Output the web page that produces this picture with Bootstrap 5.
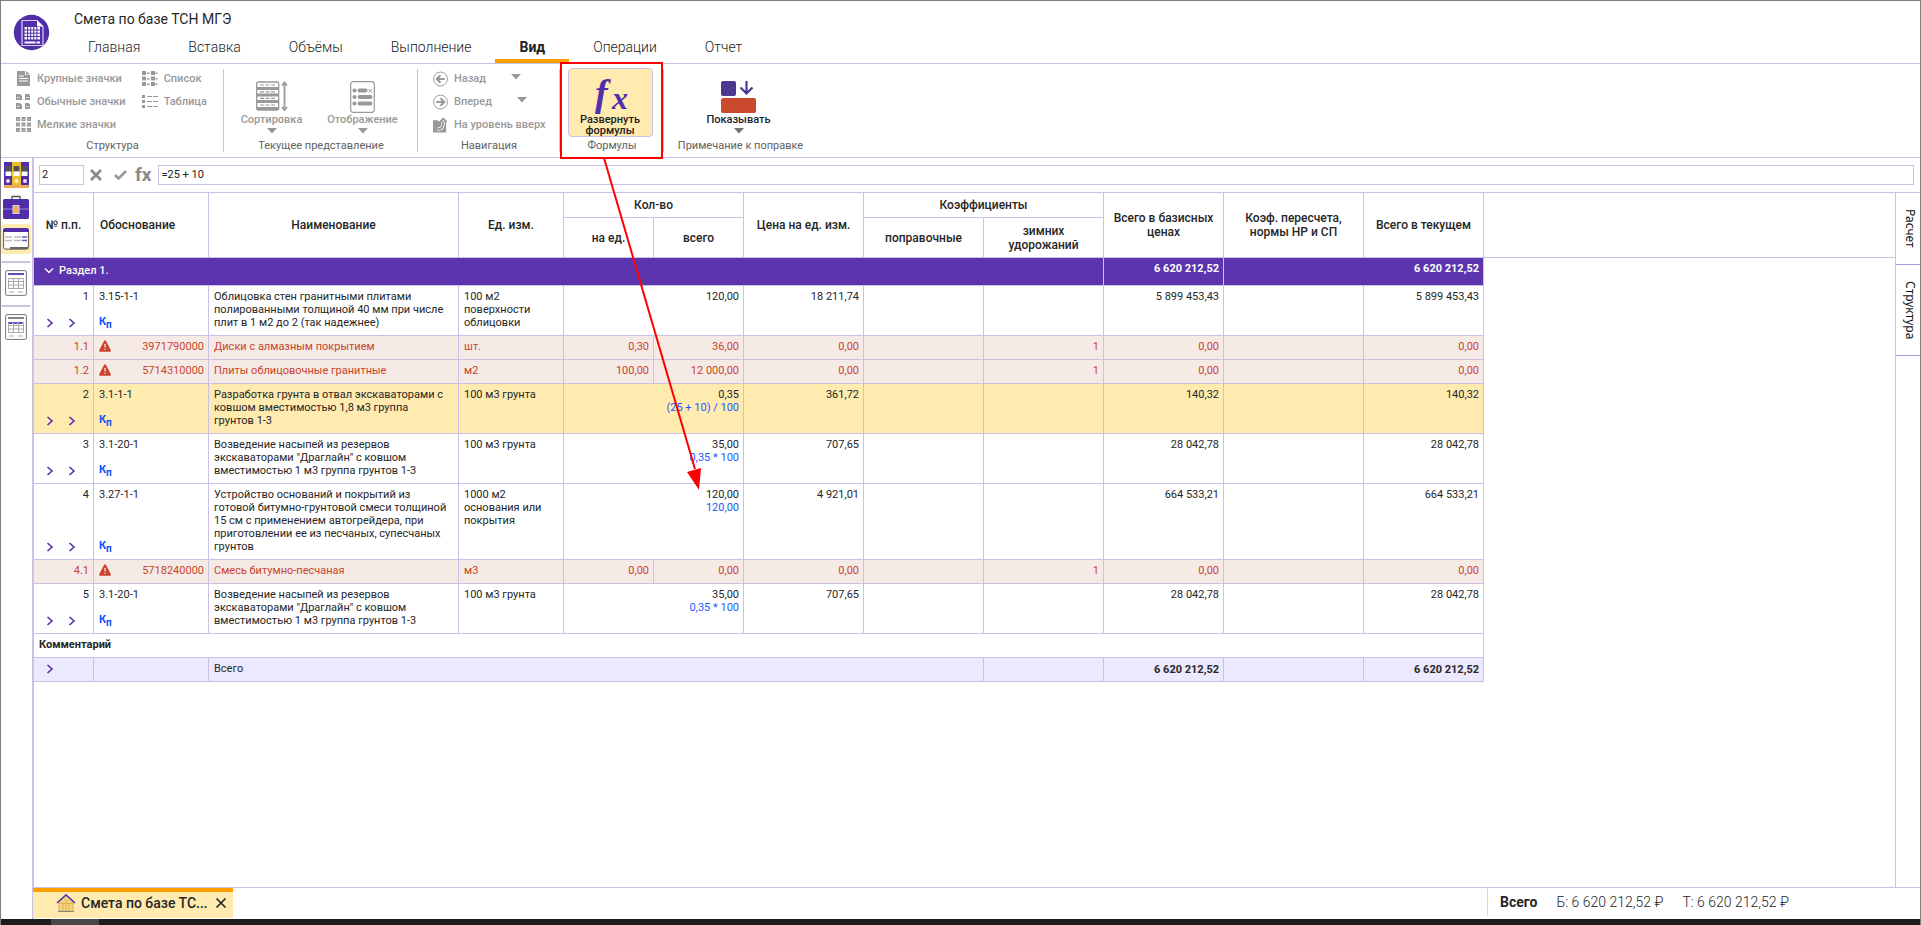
<!DOCTYPE html>
<html lang="ru">
<head>
<meta charset="utf-8">
<meta name="viewport" content="width=device-width, initial-scale=1">
<title>Смета по базе ТСН МГЭ</title>
<link href="https://cdn.jsdelivr.net/npm/bootstrap@5.3.0/dist/css/bootstrap.min.css" rel="stylesheet">
<style>
:root{--line:#cbc1e6;--brand:#5c34ae;--brand-dark:#512da8;--sel:#ffeab0;--amber:#ffa000;--alert:#c9452b;--mute:#999}
body{font-family:Roboto,"Liberation Sans",sans-serif;font-size:11px;line-height:13px;color:#262626;background:#fff;border:1px solid #7f7f7f;border-bottom-width:0}
svg{display:block;flex:none}
.line-b{border-bottom:1px solid var(--line)}
button{background:none;border:0;padding:0;color:inherit;font:inherit}
/* header */
.logo{margin:13px 0 0 12px}
.doc-title{font-size:14px;line-height:20px;font-weight:400;margin:8px 0 0 24px}
.menu{margin-left:14px}
.menu .nav-link{font-size:14px;line-height:20px;font-weight:300;color:#212121;padding:8px 24px 2px;border-bottom:4px solid transparent;border-radius:0}
.menu .nav-link.active{font-weight:700;border-color:var(--amber)}
/* ribbon */
.ribbon{height:94px}
.grp{position:relative;display:flex;flex-direction:column;align-items:center;justify-content:space-between;padding:3px 0 4px}
.grp::after{content:"";position:absolute;right:0;top:5px;bottom:5px;width:1px;background:var(--line)}
.grp:last-child::after{display:none}
.grp-name{font-size:11px;line-height:14px;color:#616161}
.grp .items{color:var(--mute);font-weight:500}
.grp .items.wide{padding-left:15px}
.grp .items.bigs{padding-top:14px}
.small-btn{display:flex;align-items:center;gap:6px;height:23px;white-space:nowrap}
.small-btn .drop{margin:0 0 4px 19px}
.big-btn{display:flex;flex-direction:column;align-items:center;width:91px;line-height:11px;font-weight:500}
.big-btn .pic{height:32px;margin-bottom:1px}
.big-btn .drop{margin-top:3px}
.big-btn.on{width:85px;height:69px;background:var(--sel);border:1px solid var(--line);border-radius:4px;padding-top:2px;color:#212121;margin-top:-3px}
.big-btn.on .pic{height:42px}
.fx-mark{font-family:"Liberation Serif",serif;font-style:italic;font-weight:700;fill:var(--brand-dark);overflow:visible}
.frame{position:absolute;left:0;right:1px;top:-2px;bottom:-2px;border:2px solid red;z-index:3}
.arrow{position:absolute;left:41px;top:94px;z-index:4;pointer-events:none}
/* rail */
.rail{flex:0 0 33px;border-right:2px solid var(--line)}
.rail button{display:flex;justify-content:center;width:30px}
.rail .doc{padding:7px 0 9px}
.rail .bag{padding:7px 0 4px}
.rail hr{width:28px;margin:0 0 0 1px;border-top:2px solid var(--line);opacity:1}
.rail .on{background:var(--sel);border-radius:3px;margin-bottom:7px}
/* formula bar */
.fbar{height:35px;padding:7px 6px 8px 5px}
.fbar input{height:20px;border:1px solid var(--line);border-radius:0;font-size:11px;line-height:14px;padding:0 2px 1px;color:#212121;outline:0}
.fbar .tools{margin:0 7px 0 6px}
.fbar .fx{font-size:19px;line-height:20px;font-weight:700;color:#8a8a8a}
/* sheet */
.sheet{width:100%;table-layout:fixed;border-collapse:separate;border-spacing:0}
.sheet th,.sheet td{border-right:1px solid var(--line);border-bottom:1px solid var(--line);padding:4px 4px 0 5px;vertical-align:top}
.sheet thead th{font-size:12px;line-height:14px;font-weight:500;text-align:center;vertical-align:middle;padding:0 4px}
.sheet thead th.basis{text-align:left;padding-left:6px}
.sheet thead th.rest{border-right:0}
.sheet tbody tr{height:24px}
.sheet tr.lines3 td{height:50px}
.sheet tr.lines5 td{height:76px}
.sheet td.nm{padding-right:9px}
.sheet .sect{height:28px;background:var(--brand);color:#fff;font-weight:500}
.sheet .sect td.num{font-weight:700}
.sheet .nob{border-right:0}
.sect-name{display:flex;align-items:center;gap:4px;padding:2px 0 0 4px}
.num{text-align:right}
.sub td{background:#f5eae6;color:var(--alert)}
.picked td{background:var(--sel)}
.total td{background:#ece8fd}
.sheet .total td.num{padding-top:5px}
.f{color:#2457ff}
.stack{display:flex;flex-direction:column;justify-content:space-between;height:100%}
.kp{color:#0b4fff;font-weight:700;font-size:11px;line-height:14px;text-align:left;padding-bottom:6px;text-decoration:none}
.kp sub{font-size:10px;bottom:-3px}
.chev{display:flex;gap:14px;padding:0 0 7px 7px}
.total .chev{padding:2px 0 0 7px}
/* side tabs */
.side{width:25px;border-left:1px solid var(--line)}
.side button{writing-mode:vertical-rl;font-family:"Noto Sans","Open Sans",sans-serif;font-size:12px;line-height:20px;width:24px;border-bottom:1px solid #a996d8;color:#111}
/* bottom */
.foot{height:32px;border-top:1px solid var(--line);font-size:14px;line-height:20px}
.doc-tab{width:200px;height:30px;background:var(--sel);border-top:4px solid var(--amber);font-weight:500;padding:0 6px 4px 23px;margin-left:-1px}
.doc-tab .cap{margin-left:5px}
.sum{width:433px;height:28px;border-left:1px solid #d6d3e2;padding-left:12px;gap:19px;font-weight:300}
.taskbar{height:6px;background:#1c1c1c;padding-left:50px}
.taskbar div{width:48px;height:100%;background:#484848}
</style>
</head>
<body class="d-flex flex-column min-vh-100">
<svg width="0" height="0" class="position-absolute" aria-hidden="true">
  <defs>
    <symbol id="gt" viewBox="0 0 8 10"><path d="M1.500 1l4.500 4-4.500 4" fill="none" stroke="#5730ad" stroke-width="1.600"/></symbol>
    <symbol id="warn" viewBox="0 0 12 12"><path d="M6 .3c.5 0 .8.300 1 .700l4.700 9c.4.900 0 1.700-1 1.700H1.300c-1 0-1.400-.8-1-1.700L5 1c.2-.4.500-.7 1-.7z" fill="#c9452b"/><path d="M6 4v3.600M6 8.800v1.300" stroke="#f5eae6" stroke-width="1.300"/></symbol>
    <symbol id="down" viewBox="0 0 10 6"><path d="M0 0h10L5 5.500z" fill="currentColor"/></symbol>
  </defs>
</svg>

<header class="d-flex line-b">
  <svg class="logo" width="37" height="37" viewBox="0 0 37 37"><circle cx="18.500" cy="18.500" r="17.700" fill="#512da8"/><path d="M9 6.500h15l6 6v19H9z" fill="none" stroke="#d9cff2" stroke-width="1.200"/><path d="M24 6.500v6h6z" fill="#fff"/><path d="M11.500 13h15.500v12.500H11.500z" fill="#fff"/><path d="M11 16h16.500M11 19.200h16.500M11 22.400h16.500M14.600 13v13M17.700 13v13M20.800 13v13M23.900 13v13" stroke="#512da8" stroke-width="1"/><path d="M11.500 27.500h11v2h-11zM23.500 27.500H27v2h-3.500z" fill="#fff"/></svg>
  <div>
    <h1 class="doc-title">Смета по базе ТСН МГЭ</h1>
    <nav class="nav menu">
      <a class="nav-link" href="#">Главная</a><a class="nav-link" href="#">Вставка</a><a class="nav-link" href="#">Объёмы</a><a class="nav-link" href="#">Выполнение</a><a class="nav-link active" href="#">Вид</a><a class="nav-link" href="#">Операции</a><a class="nav-link" href="#">Отчет</a>
    </nav>
  </div>
</header>

<section class="ribbon d-flex line-b">
  <div class="grp" style="width:223px">
    <div class="items wide d-flex gap-3 w-100">
      <div>
        <button class="small-btn"><svg width="15" height="15" viewBox="0 0 15 15"><path d="M1 0h8v4h5v11H1z" fill="#999"/><path d="M10 0l4 3.500h-4z" fill="#999"/><path d="M3 5h5M3 7.500h9M3 10h9" stroke="#fff"/></svg>Крупные значки</button>
        <button class="small-btn"><svg width="15" height="15" viewBox="0 0 15 15"><path d="M0 0h4l2 2v4H0zM9 0h4l1 2v4H9zM0 9h4l2 2v4H0zM9 9h4l1 2v4H9z" fill="#999"/><path d="M1 3.500h3M10 3.500h3M1 12.500h3M10 12.500h3" stroke="#ddd"/></svg>Обычные значки</button>
        <button class="small-btn"><svg width="15" height="15" viewBox="0 0 15 15"><path d="M0 0h4v4H0zM5.500 0h4v4h-4zM11 0h4v4h-4zM0 5.500h4v4H0zM5.500 5.500h4v4h-4zM11 5.500h4v4h-4zM0 11h4v4H0zM5.500 11h4v4h-4zM11 11h4v4h-4z" fill="#999"/><path d="M1 2.500h13M1 8h13M1 13.500h13" stroke="#ccc" stroke-width=".6"/></svg>Мелкие значки</button>
      </div>
      <div>
        <button class="small-btn"><svg width="16" height="15" viewBox="0 0 16 15"><path d="M0 0h4v4H0zM0 5.500h4v4H0zM0 11h4v4H0zM9 0h4v4H9zM9 5.500h4v4H9zM9 11h4v4H9zM5 1.500h2.500v1.500H5zM5 7h2.500v1.500H5zM5 12.500h2.500V14H5zM13.500 1.500h2v1.500h-2zM13.500 7h2v1.500h-2zM13.500 12.500h2V14h-2z" fill="#999"/></svg>Список</button>
        <button class="small-btn"><svg width="16" height="15" viewBox="0 0 16 15"><path d="M0 1h3v3H0zM0 6h3v3H0zM0 11h3v3H0z" fill="#999"/><path d="M5 2.500h5M11 2.500h5M5 7.500h5M11 7.500h5M5 12.500h5M11 12.500h5" stroke="#999"/></svg>Таблица</button>
      </div>
    </div>
    <div class="grp-name">Структура</div>
  </div>
  <div class="grp" style="width:194px">
    <div class="items bigs d-flex pe-2">
      <button class="big-btn"><span class="pic"><svg width="32" height="31" viewBox="0 0 32 31"><rect x=".7" y="1" width="22" height="28" rx="1.500" fill="#fff" stroke="#999" stroke-width="1.300"/><path d="M1 7.500h22M1 14h22M1 20.500h22M1 27.500h22" stroke="#999" stroke-width="3"/><path d="M4 4h15M4 10.800h15M4 17.300h15M4 24h15" stroke="#999" stroke-width="1.200" stroke-dasharray="4 1.500"/><path d="M28.500 3v24M26 4.500L28.500 1.500 31 4.500M26 26l2.500 3 2.500-3" fill="none" stroke="#999" stroke-width="1.800"/></svg></span>Сортировка<svg class="drop" width="10" height="6"><use href="#down"/></svg></button>
      <button class="big-btn"><span class="pic"><svg width="25" height="32" viewBox="0 0 25 32"><rect x=".7" y=".7" width="23.600" height="30.600" rx="2.500" fill="#fff" stroke="#999" stroke-width="1.200"/><circle cx="4.500" cy="9.500" r="2" fill="#999"/><circle cx="4.500" cy="16" r="2" fill="#999"/><circle cx="4.500" cy="22.500" r="2" fill="#999"/><path d="M9.500 9.500h6M9.500 16h11M9.500 22.500h11" stroke="#999" stroke-width="4" stroke-linecap="round"/><path d="M18.500 8l3.500 3.500M22 8l-3.500 3.500" stroke="#999"/></svg></span>Отображение<svg class="drop" width="10" height="6"><use href="#down"/></svg></button>
    </div>
    <div class="grp-name">Текущее представление</div>
  </div>
  <div class="grp" style="width:142px">
    <div class="items wide w-100 text-start">
      <button class="small-btn w-100"><svg width="15" height="16" viewBox="0 0 16 16"><circle cx="8" cy="8" r="7.400" fill="#fff" stroke="#999"/><path d="M12.500 8H4M8 4L4 8l4 4" fill="none" stroke="#999" stroke-width="2.200"/></svg>Назад<svg class="drop" width="10" height="6"><use href="#down"/></svg></button>
      <button class="small-btn w-100"><svg width="15" height="16" viewBox="0 0 16 16"><circle cx="8" cy="8" r="7.400" fill="#fff" stroke="#999"/><path d="M3.500 8H12M8 4l4 4-4 4" fill="none" stroke="#999" stroke-width="2.200"/></svg>Вперед<svg class="drop" width="10" height="6"><use href="#down"/></svg></button>
      <button class="small-btn w-100"><svg width="15" height="16" viewBox="0 0 16 16"><path d="M0 3h5l1 1h8v12H0z" fill="#999"/><path d="M5 12.500c4 0 6-2 6-8" fill="none" stroke="#fff" stroke-width="3.600"/><path d="M5 12.500c4 0 6-2 6-8M7.500 5L11 1.200 14.500 5" fill="none" stroke="#999" stroke-width="2"/></svg>На уровень вверх</button>
    </div>
    <div class="grp-name">Навигация</div>
  </div>
  <div class="grp" style="width:104px">
    <div class="items pt-1 mb-auto pe-1"><button class="big-btn on"><span class="pic"><svg width="44" height="42" viewBox="0 0 44 42" class="fx-mark" aria-hidden="true"><text x="7" y="35" font-size="38">f</text><text x="24" y="38" font-size="32">x</text></svg></span>Развернуть<br>формулы</button></div>
    <div class="grp-name">Формулы</div>
    <div class="frame"></div>
    <svg class="arrow" width="110" height="335" viewBox="0 0 110 335"><path d="M3 0l91 311" stroke="red" stroke-width="2"/><path d="M86 314l14-4-2 22z" fill="red"/></svg>
  </div>
  <div class="grp" style="width:153px">
    <div class="items bigs d-flex pe-1">
      <button class="big-btn text-dark"><span class="pic"><svg width="36" height="32" viewBox="0 0 36 32"><rect width="15" height="15" rx="2" fill="#4d3791"/><path d="M25.500 0v12M19.500 6.500l6 6 6-6" fill="none" stroke="#4d3791" stroke-width="2.200"/><rect y="17" width="35" height="15" rx="2" fill="#cb4a2e"/></svg></span>Показывать<svg class="drop text-secondary" width="10" height="6"><use href="#down"/></svg></button>
    </div>
    <div class="grp-name text-nowrap">Примечание к поправке</div>
  </div>
</section>

<div class="d-flex flex-grow-1">
  <aside class="rail d-flex flex-column">
    <button class="pt-1" aria-label="Папки"><svg width="25" height="26" viewBox="0 0 25 26"><path d="M0 0h8v23H0zM17 0h8v23h-8z" fill="#512da8"/><path d="M8 0h9v23H8z" fill="#ecc12d"/><path d="M1.500 4h6v5.500h-6zM9.500 4h6v5.500h-6zM17.500 4h6v5.500h-6z" fill="#555"/><path d="M1.500 9.500h6V14h-6zM9.500 9.500h6V14h-6zM17.500 9.500h6V14h-6z" fill="#fff"/><circle cx="4" cy="19" r="2" fill="#e5def5"/><circle cx="12.500" cy="19" r="2" fill="#fff3c0"/><circle cx="21" cy="19" r="2" fill="#e5def5"/><path d="M0 23h25v3H0z" fill="#ebad5c"/></svg></button>
    <button class="bag" aria-label="Портфель"><svg width="26" height="25" viewBox="0 0 26 25"><path d="M9 4V1.500h8V4" fill="none" stroke="#555" stroke-width="1.300"/><rect y="4" width="26" height="20" rx="1.500" fill="#512da8"/><path d="M0 14h26" stroke="#9d86d6"/><rect x="10" y="10.500" width="6" height="8" fill="#ebad5c" stroke="#d9cff2"/></svg></button>
    <button class="on py-1" aria-label="Смета"><svg width="26" height="22" viewBox="0 0 26 22"><rect x=".6" y=".6" width="24.800" height="20.500" rx="2" fill="#fff" stroke="#555"/><path d="M0 2c0-1 1-2 2-2h22c1 0 2 1 2 2v2H0z" fill="#512da8"/><path d="M2 9h7M11 9h7M2 12.500h7M11 12.500h7" stroke="#bbb" stroke-width="1.500"/><path d="M19 9h5M19 12.500h5" stroke="#7352bd" stroke-width="1.500"/><path d="M7 20h18" stroke="#666" stroke-width="2"/></svg></button>
    <hr>
    <button class="doc" aria-label="Отчёт"><svg width="22" height="26" viewBox="0 0 22 26"><rect x=".6" y=".6" width="20.800" height="24.800" rx="1.500" fill="#fff" stroke="#777"/><path d="M3 4h16" stroke="#6b47bd" stroke-width="2"/><path d="M3.500 8.500h15v10h-15zM3.500 11.500h15M3.500 15h15M8.500 8.500v10M13.500 8.500v10" fill="none" stroke="#aaa"/><path d="M4 22h5M13 22h5" stroke="#aaa"/></svg></button>
    <hr>
    <button class="doc" aria-label="Ведомость"><svg width="22" height="26" viewBox="0 0 22 26"><rect x=".6" y=".6" width="20.800" height="24.800" rx="1.500" fill="#fff" stroke="#777"/><path d="M3 4h16" stroke="#777" stroke-width="1.800"/><path d="M3.500 8.500h15v10h-15zM3.500 11.500h15M3.500 15h15M8.500 8.500v10M13.500 8.500v10" fill="none" stroke="#aaa"/><path d="M3.500 9h15" stroke="#6b47bd" stroke-width="2" stroke-dasharray="4 1"/><path d="M4 22h5M13 22h5" stroke="#aaa"/></svg></button>
  </aside>

  <div class="d-flex flex-column flex-grow-1">
    <div class="fbar d-flex align-items-center line-b">
      <input type="text" value="2" aria-label="Ячейка" style="width:45px">
      <div class="tools d-flex align-items-center">
        <button aria-label="Отменить"><svg width="12" height="12" viewBox="0 0 12 12"><path d="M1 1l10 10M11 1L1 11" stroke="#8a8a8a" stroke-width="2.800"/></svg></button>
        <button class="ms-2 ps-1" aria-label="Принять"><svg width="13" height="10" viewBox="0 0 13 10"><path d="M1 5l3.500 3.500L12 1" fill="none" stroke="#999" stroke-width="2.600"/></svg></button>
        <span class="fx ms-2">fx</span>
      </div>
      <input class="flex-grow-1" type="text" value="=25 + 10" aria-label="Формула">
    </div>
    <div class="d-flex flex-grow-1">
      <div class="flex-grow-1">
        <table class="sheet">
          <colgroup><col style="width:60px"><col style="width:115px"><col style="width:250px"><col style="width:105px"><col style="width:90px"><col style="width:90px"><col style="width:120px"><col style="width:120px"><col style="width:120px"><col style="width:120px"><col style="width:140px"><col style="width:120px"><col></colgroup>
          <thead>
            <tr style="height:25px"><th rowspan="2">№ п.п.</th><th rowspan="2" class="basis">Обоснование</th><th rowspan="2">Наименование</th><th rowspan="2">Ед. изм.</th><th colspan="2">Кол-во</th><th rowspan="2">Цена на ед. изм.</th><th colspan="2">Коэффициенты</th><th rowspan="2">Всего в базисных ценах</th><th rowspan="2">Коэф. пересчета, нормы НР и СП</th><th rowspan="2">Всего в текущем</th><th rowspan="2" class="rest"></th></tr>
            <tr style="height:40px"><th>на ед.</th><th>всего</th><th>поправочные</th><th>зимних<br>удорожаний</th></tr>
          </thead>
          <tbody>
            <tr class="sect"><td colspan="9"><div class="sect-name"><svg width="12" height="8" viewBox="0 0 12 8"><path d="M2 1.500l4 4 4-4" fill="none" stroke="#fff" stroke-width="1.300"/></svg>Раздел 1.</div></td><td class="num">6 620 212,52</td><td class="nob"></td><td class="num">6 620 212,52</td></tr>

            <tr class="lines3"><td class="num"><div class="stack">1<span class="chev"><svg width="8" height="10"><use href="#gt"/></svg><svg width="8" height="10"><use href="#gt"/></svg></span></div></td><td><div class="stack">3.15-1-1<a class="kp" href="#">К<sub>п</sub></a></div></td><td class="nm">Облицовка стен гранитными плитами полированными толщиной 40 мм при числе плит в 1 м2 до 2 (так надежнее)</td><td>100 м2 поверхности облицовки</td><td colspan="2" class="num">120,00</td><td class="num">18 211,74</td><td></td><td></td><td class="num">5 899 453,43</td><td></td><td class="num">5 899 453,43</td></tr>

            <tr class="sub"><td class="num">1.1</td><td><div class="d-flex justify-content-between"><svg width="12" height="12"><use href="#warn"/></svg>3971790000</div></td><td class="nm">Диски с алмазным покрытием</td><td>шт.</td><td class="num">0,30</td><td class="num">36,00</td><td class="num">0,00</td><td></td><td class="num">1</td><td class="num">0,00</td><td></td><td class="num">0,00</td></tr>
            <tr class="sub"><td class="num">1.2</td><td><div class="d-flex justify-content-between"><svg width="12" height="12"><use href="#warn"/></svg>5714310000</div></td><td class="nm">Плиты облицовочные гранитные</td><td>м2</td><td class="num">100,00</td><td class="num">12 000,00</td><td class="num">0,00</td><td></td><td class="num">1</td><td class="num">0,00</td><td></td><td class="num">0,00</td></tr>

            <tr class="lines3 picked"><td class="num"><div class="stack">2<span class="chev"><svg width="8" height="10"><use href="#gt"/></svg><svg width="8" height="10"><use href="#gt"/></svg></span></div></td><td><div class="stack">3.1-1-1<a class="kp" href="#">К<sub>п</sub></a></div></td><td class="nm">Разработка грунта в отвал экскаваторами с ковшом вместимостью 1,8 м3 группа грунтов 1-3</td><td>100 м3 грунта</td><td colspan="2" class="num">0,35<div class="f">(25 + 10) / 100</div></td><td class="num">361,72</td><td></td><td></td><td class="num">140,32</td><td></td><td class="num">140,32</td></tr>

            <tr class="lines3"><td class="num"><div class="stack">3<span class="chev"><svg width="8" height="10"><use href="#gt"/></svg><svg width="8" height="10"><use href="#gt"/></svg></span></div></td><td><div class="stack">3.1-20-1<a class="kp" href="#">К<sub>п</sub></a></div></td><td class="nm">Возведение насыпей из резервов экскаваторами "Драглайн" с ковшом вместимостью 1 м3 группа грунтов 1-3</td><td>100 м3 грунта</td><td colspan="2" class="num">35,00<div class="f">0,35 * 100</div></td><td class="num">707,65</td><td></td><td></td><td class="num">28 042,78</td><td></td><td class="num">28 042,78</td></tr>

            <tr class="lines5"><td class="num"><div class="stack">4<span class="chev"><svg width="8" height="10"><use href="#gt"/></svg><svg width="8" height="10"><use href="#gt"/></svg></span></div></td><td><div class="stack">3.27-1-1<a class="kp" href="#">К<sub>п</sub></a></div></td><td class="nm">Устройство оснований и покрытий из готовой битумно-грунтовой смеси толщиной 15 см с применением автогрейдера, при приготовлении ее из песчаных, супесчаных грунтов</td><td>1000 м2 основания или покрытия</td><td colspan="2" class="num">120,00<div class="f">120,00</div></td><td class="num">4 921,01</td><td></td><td></td><td class="num">664 533,21</td><td></td><td class="num">664 533,21</td></tr>

            <tr class="sub"><td class="num">4.1</td><td><div class="d-flex justify-content-between"><svg width="12" height="12"><use href="#warn"/></svg>5718240000</div></td><td class="nm">Смесь битумно-песчаная</td><td>м3</td><td class="num">0,00</td><td class="num">0,00</td><td class="num">0,00</td><td></td><td class="num">1</td><td class="num">0,00</td><td></td><td class="num">0,00</td></tr>

            <tr class="lines3"><td class="num"><div class="stack">5<span class="chev"><svg width="8" height="10"><use href="#gt"/></svg><svg width="8" height="10"><use href="#gt"/></svg></span></div></td><td><div class="stack">3.1-20-1<a class="kp" href="#">К<sub>п</sub></a></div></td><td class="nm">Возведение насыпей из резервов экскаваторами "Драглайн" с ковшом вместимостью 1 м3 группа грунтов 1-3</td><td>100 м3 грунта</td><td colspan="2" class="num">35,00<div class="f">0,35 * 100</div></td><td class="num">707,65</td><td></td><td></td><td class="num">28 042,78</td><td></td><td class="num">28 042,78</td></tr>

            <tr><td colspan="12" class="fw-bold">Комментарий</td></tr>
            <tr class="total"><td><span class="chev"><svg width="8" height="10"><use href="#gt"/></svg></span></td><td></td><td colspan="6">Всего</td><td></td><td class="num fw-bold">6 620 212,52</td><td></td><td class="num fw-bold">6 620 212,52</td></tr>
          </tbody>
        </table>
      </div>
      <div class="side d-flex flex-column">
        <button class="pe-0 ps-1" style="height:72px">Расчет</button>
        <button class="pe-0 ps-1" style="height:91px">Структура</button>
      </div>
    </div>
    <footer class="foot d-flex justify-content-between">
      <div class="doc-tab d-flex align-items-center">
        <svg width="20" height="18" viewBox="0 0 20 18"><path d="M3 8l7-6 7 6v9H3z" fill="#f7d27e"/><path d="M3 8v9M7 9v8M10 5v12M13 9v8M17 8v9M3 9.500h14" stroke="#d9aa4c" stroke-width=".8"/><path d="M1 9l9-8 9 8" fill="none" stroke="#512da8" stroke-width="1.600"/><path d="M2 17.400h16" stroke="#777"/></svg>
        <span class="cap text-nowrap">Смета по базе ТС...</span>
        <button class="ms-auto" aria-label="Закрыть"><svg width="12" height="12" viewBox="0 0 12 12"><path d="M1.500 1.500l9 9M10.500 1.500l-9 9" stroke="#222" stroke-width="1.600"/></svg></button>
      </div>
      <div class="sum d-flex align-items-center"><span class="fw-bold">Всего</span><span>Б: 6 620 212,52 ₽</span><span>Т: 6 620 212,52 ₽</span></div>
    </footer>
  </div>
</div>
<div class="taskbar"><div></div></div>
<script src="https://cdn.jsdelivr.net/npm/bootstrap@5.3.0/dist/js/bootstrap.bundle.min.js"></script>
</body>
</html>
